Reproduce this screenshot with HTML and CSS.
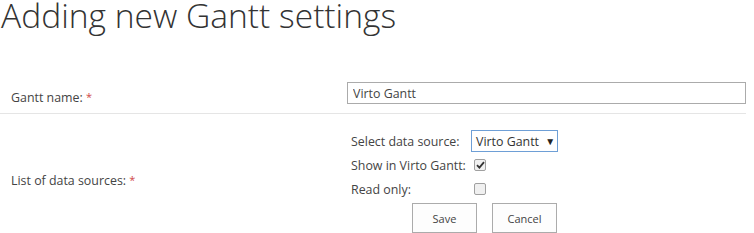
FILE: index.html
```html
<!DOCTYPE html>
<html>
    <head>
        <title>Adding new Gantt settings</title>
        <link rel="stylesheet" href="styles.css">
    </head>
    <body>
        <h1 class="titulo">Adding new Gantt settings</h1>
        <table class="form">
            <tr>
                <td class="rotulo">Gantt name: <span class="obrig">*</span></td>
                <td class="valor">
                    <input class="campo" type="text" value="Virto Gantt">
                </td>
            </tr>
            <tr>
                <td class="rotulo">List of data sources: <span class="obrig">*</span></td>
                <td class="valor fontes">
                    <div class="linha">
                        <span class="nome">Select data source:</span>
                        <span class="lista">Virto Gantt <span class="seta">&#9660;</span></span>
                    </div>
                    <div class="linha">
                        <span class="nome">Show in Virto Gantt:</span>
                        <span class="caixa marcada">
                            <svg width="9" height="8" viewBox="0 0 9 8"><path d="M1 4.2 L3.4 6.6 L8 1.2" fill="none" stroke="#333" stroke-width="1.8"/></svg>
                        </span>
                    </div>
                    <div class="linha">
                        <span class="nome">Read only:</span>
                        <span class="caixa"></span>
                    </div>
                    <div class="botoes">
                        <button class="botao">Save</button>
                        <button class="botao">Cancel</button>
                    </div>
                </td>
            </tr>
        </table>
    </body>
</html>
```

FILE: styles.css
```css
body{
    margin: 0;
    font-family: "Open Sans", "Noto Sans", sans-serif;
    font-size: 12.4px;
    color: #444;
    background: #fff;
}
.titulo{
    margin: 0;
    padding: 0 0 0 1px;
    font-size: 33.6px;
    font-weight: 300;
    line-height: 30px;
    color: #333;
    white-space: nowrap;
}
.form{
    border-collapse: collapse;
    width: 746px;
    margin-top: 52px;
}
.form td{
    border-bottom: 1px solid #e5e5e5;
    padding: 0;
}
.form tr:last-child td{
    border-bottom: none;
}
.rotulo{
    width: 336px;
    padding-left: 11px !important;
    vertical-align: middle;
}
.obrig{
    color: #d04848;
    font-size: 11px;
    vertical-align: 1px;
}
.valor{
    padding: 0 0 9px 0 !important;
}
.campo{
    display: block;
    box-sizing: border-box;
    width: 399px;
    height: 22px;
    margin: 0;
    padding: 0 5px;
    border: 1px solid #ababab;
    font-family: inherit;
    font-size: 12.4px;
    color: #444;
}
.fontes{
    padding: 15px 0 14px 4px !important;
}
.linha{
    display: flex;
    align-items: center;
    height: 24px;
    white-space: nowrap;
}
.nome{
    width: 120px;
}
.lista{
    box-sizing: border-box;
    width: 87px;
    height: 22px;
    padding: 0 4px;
    border: 1px solid #6e9fd6;
    line-height: 20px;
    color: #333;
}
.seta{
    font-size: 10px;
    margin-left: 3px;
    vertical-align: 1px;
    color: #222;
}
.caixa{
    box-sizing: border-box;
    width: 12px;
    height: 12px;
    margin-left: 3px;
    border: 1px solid #a0a0a0;
    border-radius: 2px;
    background: #f0f0f0;
    display: flex;
    align-items: center;
    justify-content: center;
}
.botoes{
    display: flex;
    gap: 15px;
    margin-left: 61px;
    margin-top: 2px;
}
.botao{
    width: 65px;
    height: 30px;
    background: #fdfdfd;
    border: 1px solid #ababab;
    font-family: inherit;
    font-size: 11px;
    color: #444;
}
```
